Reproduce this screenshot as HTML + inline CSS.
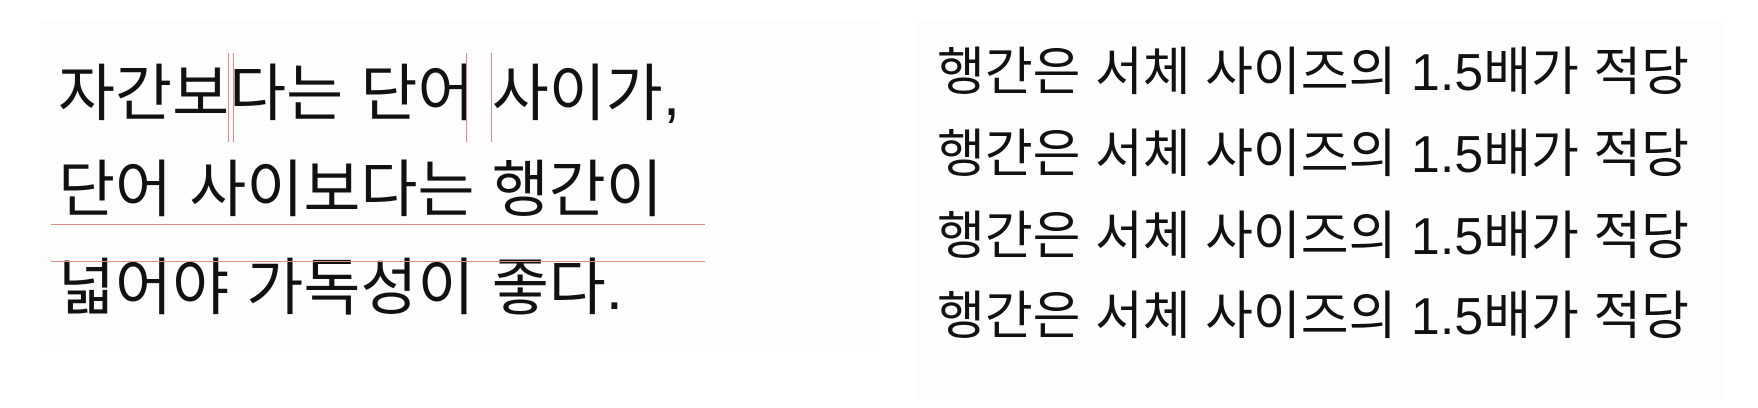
<!DOCTYPE html>
<html><head><meta charset="utf-8"><style>
html,body{margin:0;padding:0;width:1758px;height:408px;overflow:hidden;background:#fff;}
.p{position:absolute;background:#fdfdfd;}
.t{position:absolute;font-family:"Liberation Sans","Noto Sans CJK KR",sans-serif;color:#111;line-height:1;white-space:pre;transform-origin:0 0;}
.L{font-size:62px;letter-spacing:0px;}
.R{font-size:52px;}
.h{position:absolute;height:1px;background:#e08a8a;}
.v{position:absolute;width:1px;background:#e08a8a;}
</style></head><body>
<div class="p" style="left:40px;top:20px;width:840px;height:330px"></div>
<div class="p" style="left:915px;top:20px;width:810px;height:380px"></div>

<div class="t L" style="left:58px;top:64px">자간보다는 단어 사이가,</div>
<div class="t L" style="left:58px;top:160px">단어 사이보다는 행간이</div>
<div class="t L" style="left:58px;top:258px">넓어야 가독성이 좋다.</div>

<div class="h" style="left:51px;top:224px;width:654px"></div>
<div class="h" style="left:51px;top:261px;width:654px"></div>
<div class="v" style="left:228px;top:53px;height:89px"></div>
<div class="v" style="left:233px;top:53px;height:89px"></div>
<div class="v" style="left:466px;top:53px;height:89px"></div>
<div class="v" style="left:491px;top:53px;height:89px"></div>

<div class="t R" style="left:937px;top:47px">행간은 서체 사이즈의 1.5배가 적당</div>
<div class="t R" style="left:937px;top:129px">행간은 서체 사이즈의 1.5배가 적당</div>
<div class="t R" style="left:937px;top:211px">행간은 서체 사이즈의 1.5배가 적당</div>
<div class="t R" style="left:937px;top:291px">행간은 서체 사이즈의 1.5배가 적당</div>
</body></html>
